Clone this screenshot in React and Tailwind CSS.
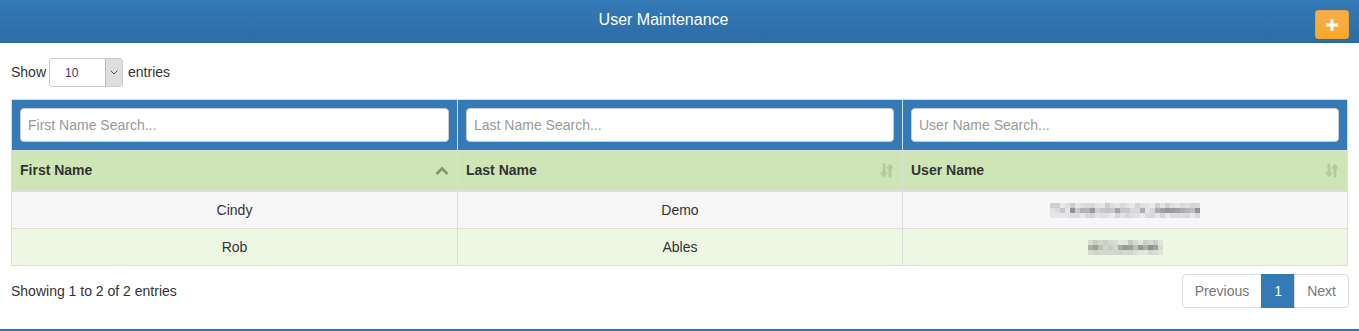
import React from "react";

const F = { fontFamily: '"Liberation Sans", Arial, sans-serif' };

function Mosaic({ cols, rows, seed, tint }) {
  const cells = [];
  let s = seed;
  for (let r = 0; r < rows; r++) {
    for (let c = 0; c < cols; c++) {
      s = (s * 9301 + 49297) % 233280;
      const v = s / 233280;
      const base = r === 0 ? 0.35 : r === 1 ? 1 : 0.25;
      const g = Math.round(235 - v * 90 * base);
      const col = tint
        ? `rgb(${g - 8},${g - 2},${g - 14})`
        : `rgb(${g},${g},${g + 4})`;
      cells.push(<rect key={r + "-" + c} x={c * 5} y={r * 5} width="5" height="5" fill={col} />);
    }
  }
  return (
    <svg width={cols * 5} height={rows * 5} className="inline-block">
      {cells}
    </svg>
  );
}

function SortBoth() {
  return (
    <svg width="14" height="15" viewBox="0 0 14 15">
      <path d="M2 0.5h3v9h2.5L3.5 14.5 -0.5 9.5H2z" fill="#b3c9a1" transform="translate(0.5 0)" />
      <path d="M9 14.5h3v-9h2.5L10.5 0.5 6.5 5.5H9z" fill="#b3c9a1" transform="translate(-0.5 0)" />
    </svg>
  );
}

function SortUp() {
  return (
    <svg width="14" height="10" viewBox="0 0 14 10">
      <path d="M7 0.5 L13.5 7 L11.5 9 L7 4.5 L2.5 9 L0.5 7 Z" fill="#7f9a70" />
    </svg>
  );
}

export default function App() {
  const cols = ["First Name", "Last Name", "User Name"];
  const ph = ["First Name Search...", "Last Name Search...", "User Name Search..."];
  return (
    <div style={F} className="w-[1359px] h-[331px] bg-white text-[14px] text-[#333] flex flex-col border-b-2 border-[#3476b1]">
      <div className="h-[43px] bg-gradient-to-b from-[#337ab7] to-[#2e6da4] border-b border-[#2a6aa3] relative flex items-center justify-center pr-[32px]">
        <span className="text-white text-[16px] -mt-[2px]">User Maintenance</span>
        <button className="absolute right-[10px] top-[10px] w-[34px] h-[29px] rounded-[3px] bg-gradient-to-b from-[#f3ad4c] to-[#faa925] border border-[#eea236] flex items-center justify-center">
          <svg width="12" height="12" viewBox="0 0 12 12">
            <path d="M4.5 0h3v4.5H12v3H7.5V12h-3V7.5H0v-3h4.5z" fill="#fff" />
          </svg>
        </button>
      </div>

      <div className="px-[11px] pt-[15px] flex-1 flex flex-col">
        <div className="flex items-center h-[29px]">
          <span>Show</span>
          <div className="ml-[3px] w-[74px] h-[29px] border border-[#ccc] rounded-[3px] flex overflow-hidden">
            <span className="flex-1 pl-[15px] flex items-center text-[12px] text-[#4a3a5a]">10</span>
            <span className="w-[17px] bg-[#dedede] border-l border-[#bbb] flex items-center justify-center">
              <svg width="8" height="5" viewBox="0 0 8 5">
                <path d="M0.5 0.5 L4 4 L7.5 0.5" stroke="#555" strokeWidth="1" fill="none" />
              </svg>
            </span>
          </div>
          <span className="ml-[5px]">entries</span>
        </div>

        <div className="mt-[12px] border border-[#ddd]">
          <div className="grid grid-cols-3 bg-[#337ab7]">
            {ph.map((p, i) => (
              <div key={p} className={"px-[8px] py-[8px] " + (i > 0 ? "border-l border-[#cfe0ef]" : "")}>
                <div className="h-[34px] bg-white border border-[#ccc] rounded-[4px] flex items-center px-[7px] text-[#999]">
                  {p}
                </div>
              </div>
            ))}
          </div>
          <div className="grid grid-cols-3 bg-[#d0e5b5] border-t border-[#ddd] border-b-2 border-b-[#ddd]">
            {cols.map((c, i) => (
              <div key={c} className={"h-[39px] pl-[8px] pr-[8px] flex items-center justify-between font-bold " + (i > 0 ? "border-l border-[#ddd]" : "")}>
                <span>{c}</span>
                {i === 0 ? <SortUp /> : <SortBoth />}
              </div>
            ))}
          </div>
          <div className="grid grid-cols-3 bg-[#f7f7f7] border-b border-[#ddd]">
            <div className="h-[36px] flex items-center justify-center">Cindy</div>
            <div className="h-[36px] flex items-center justify-center border-l border-[#ddd]">Demo</div>
            <div className="h-[36px] flex items-center justify-center border-l border-[#ddd]">
              <Mosaic cols={30} rows={3} seed={17} />
            </div>
          </div>
          <div className="grid grid-cols-3 bg-[#eef7e4]">
            <div className="h-[36px] flex items-center justify-center">Rob</div>
            <div className="h-[36px] flex items-center justify-center border-l border-[#ddd]">Ables</div>
            <div className="h-[36px] flex items-center justify-center border-l border-[#ddd]">
              <Mosaic cols={15} rows={3} seed={5} tint />
            </div>
          </div>
        </div>

        <div className="mt-[8px] flex items-center justify-between">
          <span>Showing 1 to 2 of 2 entries</span>
          <div className="flex h-[34px] mr-[-1px]">
            <span className="px-[12px] flex items-center border border-[#ddd] rounded-l-[4px] text-[#777]">Previous</span>
            <span className="w-[34px] flex items-center justify-center bg-[#337ab7] border border-[#337ab7] text-white -ml-px">1</span>
            <span className="px-[12px] flex items-center border border-[#ddd] rounded-r-[4px] text-[#777] -ml-px">Next</span>
          </div>
        </div>
      </div>
    </div>
  );
}
